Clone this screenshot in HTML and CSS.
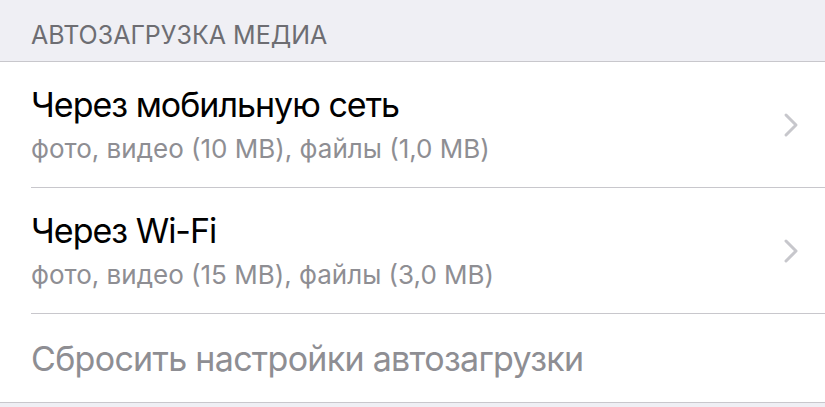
FILE: index.html
```html
<!DOCTYPE html>
<html lang="ru">
<head>
    <meta charset="UTF-8">
    <meta name="viewport" content="width=device-width, initial-scale=1.0">
    <title>Автозагрузка медиа</title>
    <link rel="stylesheet" href="styles.css">
</head>
<body>
    <div class="section-header">АВТОЗАГРУЗКА МЕДИА</div>
    <div class="list">
        <div class="item">
            <div class="item-body">
                <div class="item-text">
                    <div class="item-title">Через мобильную сеть</div>
                    <div class="item-sub">фото, видео (10 MB), файлы (1,0 MB)</div>
                </div>
                <svg class="chevron" width="16" height="26" viewBox="0 0 16 26">
                    <path d="M3 3 L13 13 L3 23" fill="none" stroke="#c7c7cc" stroke-width="3" stroke-linecap="round" stroke-linejoin="round"/>
                </svg>
            </div>
        </div>
        <div class="item">
            <div class="item-body">
                <div class="item-text">
                    <div class="item-title">Через Wi-Fi</div>
                    <div class="item-sub">фото, видео (15 MB), файлы (3,0 MB)</div>
                </div>
                <svg class="chevron" width="16" height="26" viewBox="0 0 16 26">
                    <path d="M3 3 L13 13 L3 23" fill="none" stroke="#c7c7cc" stroke-width="3" stroke-linecap="round" stroke-linejoin="round"/>
                </svg>
            </div>
        </div>
        <div class="item">
            <div class="item-body reset">
                <div class="reset-text">Сбросить настройки автозагрузки</div>
            </div>
        </div>
    </div>
</body>
</html>
```
FILE: styles.css
```css
body {
    margin: 0;
    background-color: #efeff4;
    font-family: Inter, "Noto Sans", sans-serif;
    -webkit-font-smoothing: antialiased;
}
.section-header {
    height: 62px;
    box-sizing: border-box;
    padding: 20px 0 0 31px;
    font-size: 25px;
    line-height: 30px;
    color: #6d6d72;
    border-bottom: 1px solid #c8c7cc;
}
.list {
    background: #fff;
    border-bottom: 1px solid #c8c7cc;
}
.item {
    padding-left: 31px;
}
.item + .item .item-body {
    border-top: 1px solid #c8c7cc;
}
.item-body {
    display: flex;
    align-items: center;
    height: 125px;
    box-sizing: border-box;
    padding-right: 26px;
}
.item + .item .item-body {
    height: 126px;
}
.item-text {
    flex: 1;
}
.item-title {
    font-size: 34px;
    line-height: 42px;
    letter-spacing: -1px;
    color: #000;
}
.item-sub {
    font-size: 26px;
    line-height: 34px;
    margin-top: 6px;
    color: #8e8e93;
}
.chevron {
    flex: none;
}
.item + .item .item-body.reset {
    height: 89px;
}
.reset-text {
    font-size: 34px;
    letter-spacing: -0.7px;
    color: #8e8e93;
}
```
